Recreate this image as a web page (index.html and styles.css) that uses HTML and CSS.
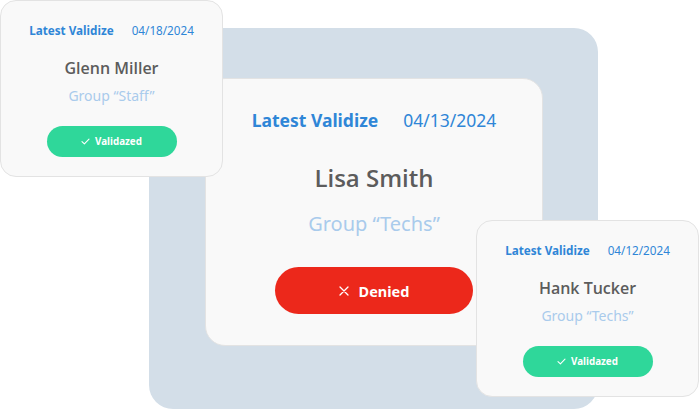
FILE: index.html
```html
<!DOCTYPE html>
<html lang="en">
<head>
<meta charset="utf-8">
<title>Validations</title>
<link rel="stylesheet" href="styles.css">
</head>
<body>
<div class="stage">
  <div class="panel"></div>

  <div class="card card-main">
    <div class="head">
      <span class="label">Latest Validize</span>
      <span class="date">04/13/2024</span>
    </div>
    <div class="name">Lisa Smith</div>
    <div class="group">Group “Techs”</div>
    <div class="btn btn-denied">
      <svg class="ico-x" viewBox="0 0 10 10" width="10" height="10"><path d="M1 1 L9 9 M9 1 L1 9" stroke="#fff" stroke-width="1.3" fill="none" stroke-linecap="round"/></svg>
      <span>Denied</span>
    </div>
  </div>

  <div class="card card-small card-tl">
    <div class="head">
      <span class="label">Latest Validize</span>
      <span class="date">04/18/2024</span>
    </div>
    <div class="name">Glenn Miller</div>
    <div class="group">Group “Staff”</div>
    <div class="btn btn-ok">
      <svg class="ico-check" viewBox="0 0 9 7" width="9" height="7"><path d="M1 3.6 L3.4 5.8 L8 1.2" stroke="#fff" stroke-width="1.1" fill="none" stroke-linecap="round" stroke-linejoin="round"/></svg>
      <span>Validazed</span>
    </div>
  </div>

  <div class="card card-small card-br">
    <div class="head">
      <span class="label">Latest Validize</span>
      <span class="date">04/12/2024</span>
    </div>
    <div class="name">Hank Tucker</div>
    <div class="group">Group “Techs”</div>
    <div class="btn btn-ok">
      <svg class="ico-check" viewBox="0 0 9 7" width="9" height="7"><path d="M1 3.6 L3.4 5.8 L8 1.2" stroke="#fff" stroke-width="1.1" fill="none" stroke-linecap="round" stroke-linejoin="round"/></svg>
      <span>Validazed</span>
    </div>
  </div>
</div>
</body>
</html>
```

FILE: styles.css
```css
* { box-sizing: border-box; }
html, body {
  margin: 0;
  padding: 0;
  background: #ffffff;
}
body {
  font-family: "Noto Sans", "Open Sans", sans-serif;
}
.stage {
  position: relative;
  width: 699px;
  height: 409px;
  overflow: hidden;
}
.panel {
  position: absolute;
  left: 149px;
  top: 28px;
  width: 449px;
  height: 381px;
  background: #d3dee8;
  border-radius: 24px;
}
.card {
  position: absolute;
  display: flex;
  flex-direction: column;
  align-items: center;
  background: #f9f9f9;
  border: 1px solid #e3e3e3;
}
.head {
  display: flex;
  align-items: baseline;
  color: #2f86d7;
}
.label { font-weight: 700; }
.date { font-weight: 400; }
.name {
  color: #5c5c5c;
  font-family: "Open Sans", "Noto Sans", sans-serif;
  font-weight: 600;
}
.group {
  color: #a9cbec;
}
.btn {
  display: flex;
  align-items: center;
  justify-content: center;
  color: #fff;
  font-weight: 700;
  border-radius: 999px;
}

/* main card */
.card-main {
  left: 205px;
  top: 78px;
  width: 338px;
  height: 268px;
  border-radius: 20px;
  padding-top: 29px;
}
.card-main .head {
  font-size: 17.5px;
  line-height: 24px;
  gap: 25px;
}
.card-main .name {
  font-size: 24px;
  line-height: 32px;
  margin-top: 30px;
}
.card-main .group {
  font-size: 20px;
  line-height: 28px;
  margin-top: 16px;
}
.btn-denied {
  margin-top: 29px;
  width: 198px;
  height: 47px;
  background: #ec281b;
  font-size: 14.5px;
  gap: 10px;
}
.ico-x { display: block; }

/* small cards */
.card-small {
  width: 223px;
  height: 177px;
  border-radius: 16px;
  padding-top: 21px;
}
.card-tl { left: 0; top: 0; }
.card-br { left: 476px; top: 220px; }
.card-small .head {
  font-size: 11.7px;
  line-height: 16px;
  gap: 18px;
}
.card-small .name {
  font-size: 16px;
  line-height: 22px;
  margin-top: 19px;
}
.card-small .group {
  font-size: 14px;
  line-height: 20px;
  margin-top: 7px;
}
.btn-ok {
  margin-top: 20px;
  width: 130px;
  height: 31px;
  background: #2fd79a;
  font-size: 9.8px;
  gap: 5px;
}
.ico-check { display: block; }
```
